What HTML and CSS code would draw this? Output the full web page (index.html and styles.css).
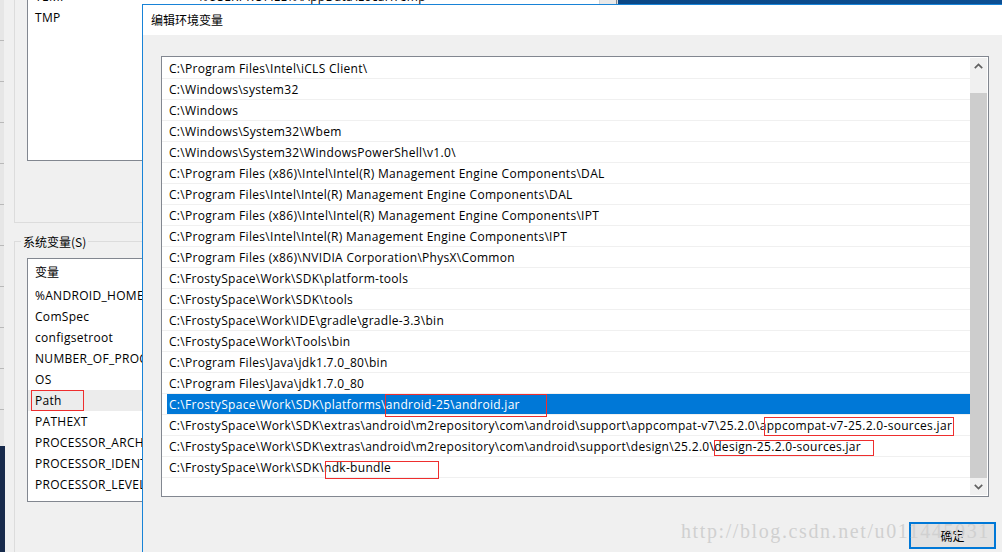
FILE: index.html
```html
<!DOCTYPE html>
<html lang="zh-CN">
<head>
<meta charset="utf-8">
<title>编辑环境变量</title>
<link rel="stylesheet" href="styles.css">
</head>
<body>
<div class="screen">
  <div class="far-window"></div>

  <div class="env-window">
    <div class="user-group">
      <div class="var-list user-list">
        <div class="var-rows">
          <div class="var-row"><span class="c1">TEMP</span><span class="c2">%USERPROFILE%\AppData\Local\Temp</span></div>
          <div class="var-row"><span class="c1">TMP</span></div>
        </div>
        <div class="mini-scroll"></div>
      </div>
    </div>
    <fieldset class="sys-group">
      <legend class="group-label">系统变量(S)</legend>
      <div class="var-list sys-list">
        <div class="var-rows">
          <div class="var-head"><span class="c1">变量</span></div>
          <div class="var-row"><span class="c1">%ANDROID_HOME%</span></div>
          <div class="var-row"><span class="c1">ComSpec</span></div>
          <div class="var-row"><span class="c1">configsetroot</span></div>
          <div class="var-row"><span class="c1">NUMBER_OF_PROCESSORS</span></div>
          <div class="var-row"><span class="c1">OS</span></div>
          <div class="var-row is-hl"><span class="c1">Path</span></div>
          <div class="var-row"><span class="c1">PATHEXT</span></div>
          <div class="var-row"><span class="c1">PROCESSOR_ARCHITECTURE</span></div>
          <div class="var-row"><span class="c1">PROCESSOR_IDENTIFIER</span></div>
          <div class="var-row"><span class="c1">PROCESSOR_LEVEL</span></div>
        </div>
      </div>
    </fieldset>
  </div>

  <div class="dialog">
    <div class="titlebar">编辑环境变量</div>
    <div class="dlg-body">
      <div class="pathbox">
        <div class="path-rows">
          <div class="prow"><span class="cell">C:\Program Files\Intel\iCLS Client\</span></div>
          <div class="prow"><span class="cell">C:\Windows\system32</span></div>
          <div class="prow"><span class="cell">C:\Windows</span></div>
          <div class="prow"><span class="cell">C:\Windows\System32\Wbem</span></div>
          <div class="prow"><span class="cell">C:\Windows\System32\WindowsPowerShell\v1.0\</span></div>
          <div class="prow"><span class="cell">C:\Program Files (x86)\Intel\Intel(R) Management Engine Components\DAL</span></div>
          <div class="prow"><span class="cell">C:\Program Files\Intel\Intel(R) Management Engine Components\DAL</span></div>
          <div class="prow"><span class="cell">C:\Program Files (x86)\Intel\Intel(R) Management Engine Components\IPT</span></div>
          <div class="prow"><span class="cell">C:\Program Files\Intel\Intel(R) Management Engine Components\IPT</span></div>
          <div class="prow"><span class="cell">C:\Program Files (x86)\NVIDIA Corporation\PhysX\Common</span></div>
          <div class="prow"><span class="cell">C:\FrostySpace\Work\SDK\platform-tools</span></div>
          <div class="prow"><span class="cell">C:\FrostySpace\Work\SDK\tools</span></div>
          <div class="prow"><span class="cell">C:\FrostySpace\Work\IDE\gradle\gradle-3.3\bin</span></div>
          <div class="prow"><span class="cell">C:\FrostySpace\Work\Tools\bin</span></div>
          <div class="prow"><span class="cell">C:\Program Files\Java\jdk1.7.0_80\bin</span></div>
          <div class="prow"><span class="cell">C:\Program Files\Java\jdk1.7.0_80</span></div>
          <div class="prow is-selected"><span class="cell">C:\FrostySpace\Work\SDK\platforms\android-25\android.jar</span></div>
          <div class="prow"><span class="cell">C:\FrostySpace\Work\SDK\extras\android\m2repository\com\android\support\appcompat-v7\25.2.0\appcompat-v7-25.2.0-sources.jar</span></div>
          <div class="prow"><span class="cell">C:\FrostySpace\Work\SDK\extras\android\m2repository\com\android\support\design\25.2.0\design-25.2.0-sources.jar</span></div>
          <div class="prow"><span class="cell">C:\FrostySpace\Work\SDK\ndk-bundle</span></div>
        </div>
        <div class="vscroll">
          <div class="sb-btn">
            <svg width="17" height="17" viewBox="0 0 17 17"><path d="M4.8 10.2 L8.5 6.5 L12.2 10.2" fill="none" stroke="#606060" stroke-width="1.7"/></svg>
          </div>
          <div class="sb-track-top"></div>
          <div class="sb-thumb"></div>
          <div class="sb-btn">
            <svg width="17" height="17" viewBox="0 0 17 17"><path d="M4.8 6.8 L8.5 10.5 L12.2 6.8" fill="none" stroke="#606060" stroke-width="1.7"/></svg>
          </div>
        </div>
      </div>
      <div class="dlg-footer">
        <button class="btn-ok" type="button">确定</button>
      </div>
    </div>
  </div>

  <div class="mark mark-path"></div>
  <div class="mark mark-android"></div>
  <div class="mark mark-appcompat"></div>
  <div class="mark mark-design"></div>
  <div class="mark mark-ndk"></div>

  <div class="watermark">http://blog.csdn.net/u011445031</div>
</div>
</body>
</html>
```

FILE: styles.css
```css
* { box-sizing: border-box; }

html, body {
  margin: 0;
  padding: 0;
}

body {
  width: 1002px;
  height: 552px;
  overflow: hidden;
  font-family: "Open Sans", "Noto Sans CJK SC", sans-serif;
  font-size: 12px;
  color: #000;
}

.screen {
  position: relative;
  width: 1002px;
  height: 552px;
  overflow: hidden;
  background: linear-gradient(90deg, #0c3767 0%, #0b4785 60%, #0c4f93 100%);
}

/* window far behind, only a thin strip visible on the left */
.far-window {
  position: absolute;
  left: 0;
  top: 0;
  width: 5px;
  height: 446px;
  background:
    repeating-linear-gradient(180deg, transparent 0, transparent 40px, #b9b9b9 40px, #b9b9b9 41px),
    #e6e6e6;
}

.screen::after {
  content: "";
  position: absolute;
  left: 0;
  top: 446px;
  width: 5px;
  height: 106px;
  background: #172a4b;
}

/* environment variables window (behind dialog) */
.env-window {
  position: absolute;
  left: 4px;
  top: -40px;
  width: 614px;
  height: 640px;
  background: #f0f0f0;
  padding: 10px 0 0 10px;
  display: flex;
  flex-direction: column;
}

.user-group {
  border: 1px solid #dcdcdc;
  padding: 13px 0 61px 12px;
}

.var-list {
  display: flex;
  background: #fff;
  border: 1px solid #828790;
}

.user-list {
  height: 177px;
  padding-top: 1px;
}

.var-rows {
  flex: 1;
  display: flex;
  flex-direction: column;
}

.var-row,
.var-head {
  display: flex;
  height: 21px;
  line-height: 21px;
  white-space: nowrap;
  letter-spacing: 0.3px;
}

.var-head {
  height: 26px;
  line-height: 26px;
  font-family: "Noto Sans CJK SC", sans-serif;
  letter-spacing: 0;
}

.var-row.is-hl {
  background: #ececec;
}

.c1 {
  width: 170px;
  padding-left: 7px;
  overflow: hidden;
}

.sys-list .c1 {
  width: 114px;
}

.c2 {
  flex: 1;
}

.mini-scroll {
  width: 17px;
  background: #e8e8e8;
  border-left: 1px solid #d6d6d6;
}

.sys-group {
  margin: 10px 0 0 0;
  border: 1px solid #dcdcdc;
  padding: 8px 0 200px 12px;
  min-width: 0;
}

.group-label {
  font-family: "Noto Sans CJK SC", sans-serif;
  font-size: 12px;
  line-height: 17px;
  padding: 0 2px;
  margin-left: -6px;
  color: #000;
}

.sys-list {
  height: 244px;
}

/* dialog */
.dialog {
  position: absolute;
  left: 142px;
  top: 4px;
  width: 900px;
  height: 580px;
  border: 1px solid #1883d7;
  background: #f0f0f0;
  display: flex;
  flex-direction: column;
}

.titlebar {
  height: 30px;
  line-height: 30px;
  background: #fff;
  padding-left: 8px;
  font-family: "Noto Sans CJK SC", sans-serif;
  font-size: 12px;
}

.dlg-body {
  padding: 21px 0 0 18px;
  display: flex;
  flex-direction: column;
}

.pathbox {
  width: 828px;
  height: 441px;
  border: 1px solid #828790;
  background: #fff;
  padding: 1px 1px 1px 0;
  display: flex;
}

.path-rows {
  flex: 1;
  display: flex;
  flex-direction: column;
  overflow: hidden;
}

.prow {
  height: 21px;
  border-bottom: 1px solid #f0f0f0;
  display: flex;
  flex-shrink: 0;
}

.cell {
  flex: 1;
  margin-left: 5px;
  padding-left: 2px;
  height: 20px;
  line-height: 21px;
  white-space: nowrap;
  overflow: hidden;
  letter-spacing: 0.3px;
}

.prow.is-selected .cell {
  background: #0078d7;
  color: #fff;
}

.vscroll {
  width: 17px;
  background: #f0f0f0;
  display: flex;
  flex-direction: column;
}

.sb-btn {
  height: 17px;
  display: flex;
}

.sb-track-top {
  height: 18px;
}

.sb-thumb {
  flex: 1;
  background: #cdcdcd;
}

.dlg-footer {
  padding: 25px 0 0 748px;
  display: flex;
}

.btn-ok {
  width: 87px;
  height: 27px;
  border: 2px solid #0078d7;
  background: #e1e1e1;
  font-family: "Noto Sans CJK SC", sans-serif;
  font-size: 12px;
  color: #000;
  padding: 0;
  margin: 0;
}

/* red annotation boxes */
.mark {
  position: absolute;
  border: 1px solid #ee2e2e;
}

.mark-path      { left: 31px;  top: 390px; width: 53px;  height: 21px; }
.mark-android   { left: 385px; top: 394px; width: 162px; height: 23px; }
.mark-appcompat { left: 764px; top: 417px; width: 190px; height: 19px; }
.mark-design    { left: 714px; top: 440px; width: 160px; height: 16px; }
.mark-ndk       { left: 325px; top: 461px; width: 114px; height: 18px; }

.watermark {
  position: absolute;
  left: 681px;
  top: 521px;
  font-family: "Liberation Serif", serif;
  font-size: 20px;
  line-height: 20px;
  letter-spacing: 1.6px;
  color: #d0d0d0;
  white-space: nowrap;
  pointer-events: none;
}
```
